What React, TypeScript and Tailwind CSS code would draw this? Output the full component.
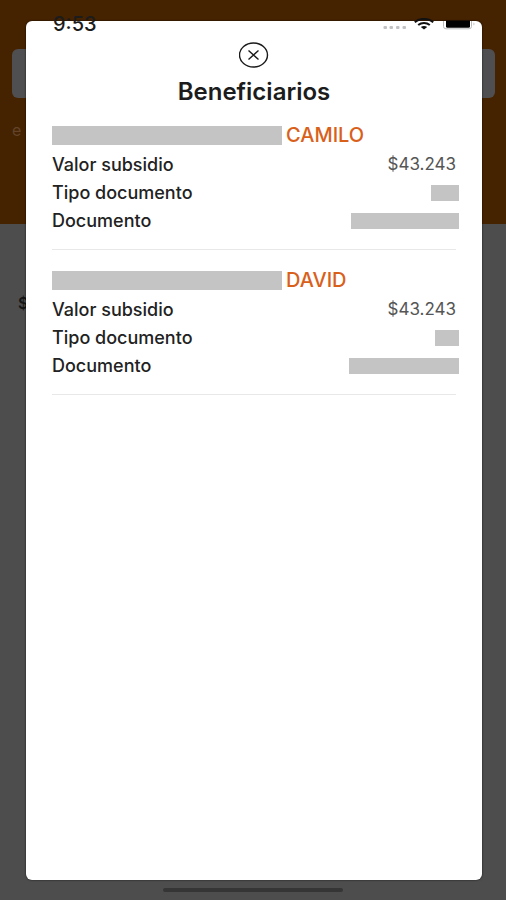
import React from "react";

type Beneficiary = {
  name: string;
  amount: string;
  typeBar: string;
  documentBar: string;
};

const beneficiaries: Beneficiary[] = [
  { name: "CAMILO", amount: "$43.243", typeBar: "w-7 h-4", documentBar: "w-[108px] h-4" },
  { name: "DAVID", amount: "$43.243", typeBar: "w-6 h-4", documentBar: "w-[110px] h-4" },
];

function StatusBar() {
  return (
    <div className="absolute inset-x-0 top-3 flex h-6 items-center justify-between pr-[30px] pl-[53px]">
      <span className="text-xl leading-6 font-medium text-[#1c1c1c]">9:53</span>
      <div className="flex items-end">
        <svg width="24" height="4" viewBox="0 0 24 4" className="mr-[7px]" fill="#c2c2c4" aria-hidden="true">
          <rect x="0.5" y="0" width="3.5" height="3" rx="1" />
          <rect x="6.5" y="0" width="3.5" height="3" rx="1" />
          <rect x="13" y="0" width="3.5" height="3" rx="1" />
          <rect x="19.5" y="0" width="3.5" height="3" rx="1" />
        </svg>
        <svg width="20" height="12" viewBox="0 0 20 12" className="mr-2" fill="none" stroke="#111" strokeWidth="2" aria-hidden="true">
          <path d="M0.8 4.2C5.8-0.2 14.2-0.2 19.2 4.2" />
          <path d="M4.2 7C7.5 4.3 12.5 4.3 15.8 7" />
          <path d="M6.8 9C8.6 7.6 11.4 7.6 13.2 9L10 11.6Z" fill="#111" stroke="none" />
        </svg>
        <svg width="34" height="12" viewBox="0 0 34 12" aria-hidden="true">
          <path d="M1.5 3V8.5Q1.5 10.8 4 10.8H27Q29.5 10.8 29.5 8.5V3" fill="none" stroke="#b9b9b9" />
          <path d="M4 2.5H28V8.6Q28 9.8 26.5 9.8H5.5Q4 9.8 4 8.6Z" fill="#000" />
          <path d="M31.5 4.5Q33.5 6 31.5 7.5Z" fill="#b9b9b9" />
        </svg>
      </div>
    </div>
  );
}

function Redacted({ size }: { size: string }) {
  return <span className={`-mr-[3px] block bg-[#c4c4c4] ${size}`} />;
}

function Row({ label, children }: { label: string; children: React.ReactNode }) {
  return (
    <div className="flex h-7 items-center justify-between">
      <dt className="text-lg font-medium text-[#222]">{label}</dt>
      <dd className="text-[17px] text-[#555]">{children}</dd>
    </div>
  );
}

function BeneficiaryCard({ item }: { item: Beneficiary }) {
  return (
    <section className="border-b border-[#e8e8e8] pb-3.5">
      <h2 className="flex h-[30px] items-center gap-1 text-xl font-medium text-[#d9601a]">
        <span className="block h-[19px] w-[230px] bg-[#c4c4c4]" />
        {item.name}
      </h2>
      <dl className="pt-px">
        <Row label="Valor subsidio">
          <span className="block">{item.amount}</span>
        </Row>
        <Row label="Tipo documento">
          <Redacted size={item.typeBar} />
        </Row>
        <Row label="Documento">
          <Redacted size={item.documentBar} />
        </Row>
      </dl>
    </section>
  );
}

export default function App() {
  return (
    <div className="relative flex min-h-screen flex-col overflow-hidden bg-[#4d4d4d] font-['Inter','Liberation_Sans',sans-serif]">
      <header className="h-56 bg-[#452200] pt-[49px] pr-[11px] pl-3">
        <div className="h-[49px] rounded-md bg-[#4f4f51]" />
        <p className="pt-5 text-base text-[#62442a]">e</p>
      </header>
      <div className="flex-1 px-[18px] pt-[67px] text-base font-semibold text-[#151515]">$</div>
      <div className="mx-auto mb-2 h-1 w-[180px] rounded-full bg-[#353535]" />

      <div className="absolute inset-0 flex pt-[21px] pr-6 pb-5 pl-[26px]">
        <div
          role="dialog"
          aria-labelledby="title"
          className="flex-1 rounded-md bg-white px-[26px] pt-[21px] shadow-[0_0_2px_rgba(0,0,0,0.8)]"
        >
          <button type="button" aria-label="Cerrar" className="mx-auto block h-[26px] w-[30px]">
            <svg width="30" height="26" viewBox="0 0 30 26" fill="none" stroke="#1a1a1a" strokeWidth="1.4">
              <ellipse cx="14.5" cy="13" rx="14" ry="12" />
              <path d="M9.5 8.5L19.5 17.5M19.5 8.5L9.5 17.5" />
            </svg>
          </button>
          <h1 id="title" className="pt-2 text-center text-2xl leading-8 font-semibold text-[#1c1c1c]">
            Beneficiarios
          </h1>
          <div className="flex flex-col gap-[15px] pt-3">
            {beneficiaries.map((item) => (
              <BeneficiaryCard key={item.name} item={item} />
            ))}
          </div>
        </div>
      </div>
      <StatusBar />
    </div>
  );
}
